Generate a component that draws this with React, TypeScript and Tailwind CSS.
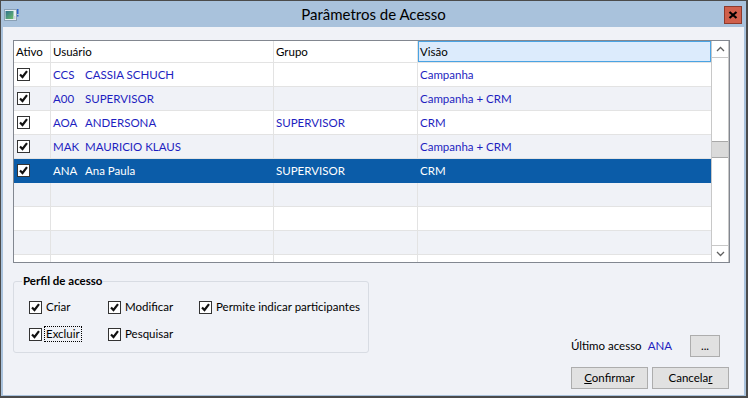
import React from "react";

type Row = { code: string; name: string; grupo: string; visao: string; selected?: boolean };

const rows: Row[] = [
    { code: "CCS", name: "CASSIA SCHUCH", grupo: "", visao: "Campanha" },
    { code: "A00", name: "SUPERVISOR", grupo: "", visao: "Campanha + CRM" },
    { code: "AOA", name: "ANDERSONA", grupo: "SUPERVISOR", visao: "CRM" },
    { code: "MAK", name: "MAURICIO KLAUS", grupo: "", visao: "Campanha + CRM" },
    { code: "ANA", name: "Ana Paula", grupo: "SUPERVISOR", visao: "CRM", selected: true },
];

const font = { fontFamily: "Lato, 'Noto Sans', sans-serif" };

const Check = () => (
    <span className="w-[13px] h-[13px] shrink-0 border border-[#333] bg-white flex items-center justify-center">
        <svg width="9" height="9" viewBox="0 0 9 9">
            <path d="M1 4.5 L3.5 7 L8 1.2" stroke="#111" strokeWidth="2.2" fill="none" />
        </svg>
    </span>
);

const Option = ({ label, focus }: { label: string; focus?: boolean }) => (
    <label className="h-[16px] flex items-center gap-[2px] text-[11.5px] text-black whitespace-nowrap">
        <Check />
        <span className={focus ? "border border-dotted border-black px-[1px] leading-[14px]" : "px-[2px]"}>{label}</span>
    </label>
);

const TitleIcon = () => (
    <svg width="15" height="12" viewBox="0 0 15 12">
        <defs>
            <linearGradient id="g" x1="0" y1="0" x2="1" y2="1">
                <stop offset="0" stopColor="#2f6f8f" />
                <stop offset="1" stopColor="#6cbf6a" />
            </linearGradient>
        </defs>
        <rect x="0.5" y="0.5" width="12" height="11" fill="#e8eef3" stroke="#8aa0b5" />
        <rect x="1.5" y="2" width="8" height="8" fill="url(#g)" />
        <rect x="9.5" y="7" width="2" height="3" fill="#c9d2da" />
        <rect x="13" y="0" width="1.5" height="5" fill="#2a63c9" />
        <rect x="13" y="6" width="1.5" height="1.5" fill="#2a63c9" />
    </svg>
);

export default function App() {
    return (
        <div className="w-[748px] h-[398px] bg-[#a9c2dc] border-t border-l border-r-2 border-b-2 border-[#4b4b4b] flex flex-col" style={font}>
            <div className="h-[26px] relative flex items-center justify-center shrink-0">
                <div className="absolute left-[3px] top-[8px]">
                    <TitleIcon />
                </div>
                <span className="text-[15px] text-black">Parâmetros de Acesso</span>
                <div className="absolute right-[4px] top-[5px] w-[18px] h-[18px] bg-[#d0604c] border border-[#8e3a2c] flex items-center justify-center">
                    <svg width="10" height="8" viewBox="0 0 10 8">
                        <path d="M1.5 1 L8.5 7 M8.5 1 L1.5 7" stroke="#000" strokeWidth="2.2" />
                    </svg>
                </div>
            </div>

            <div className="flex-1 mx-[2px] mb-[1px] bg-[#f0f2f7] flex flex-col pt-[13px] pl-[10px] pr-[14px] pb-[6px]">
                <div className="h-[223px] border border-[#828790] bg-white flex overflow-hidden shrink-0">
                    <div className="flex-1 flex flex-col text-[11.5px]">
                        <div className="h-[22px] shrink-0 grid grid-cols-[37px_223px_144px_1fr] border-b border-[#e3e3e3] text-black">
                            <div className="border-r border-[#e3e3e3] pl-[2px] flex items-center">Ativo</div>
                            <div className="border-r border-[#e3e3e3] pl-[2px] flex items-center">Usuário</div>
                            <div className="border-r border-[#e3e3e3] pl-[2px] flex items-center">Grupo</div>
                            <div className="border border-[#4aa3e3] bg-[#dcebfc] pl-[1px] flex items-center">Visão</div>
                        </div>
                        {rows.map((r, i) => (
                            <div
                                key={r.code}
                                className={`h-[24px] shrink-0 grid grid-cols-[37px_223px_144px_1fr] border-b ${r.selected
                                    ? "bg-[#0b5ca8] text-white border-[#0b5ca8]"
                                    : i % 2 === 0
                                        ? "bg-white text-[#1e1ec0] border-[#e3e3e3]"
                                        : "bg-[#f0f2f7] text-[#1e1ec0] border-[#e3e3e3]"
                                    }`}
                            >
                                <div className={`pl-[3px] flex items-center ${r.selected ? "" : "border-r border-[#e3e3e3]"}`}>
                                    <Check />
                                </div>
                                <div className={`pl-[2px] flex items-center ${r.selected ? "" : "border-r border-[#e3e3e3]"}`}>
                                    <span className="w-[32px]">{r.code}</span>
                                    <span>{r.name}</span>
                                </div>
                                <div className={`pl-[2px] flex items-center ${r.selected ? "" : "border-r border-[#e3e3e3]"}`}>{r.grupo}</div>
                                <div className="pl-[2px] flex items-center">{r.visao}</div>
                            </div>
                        ))}
                        {[0, 1, 2, 3].map((i) => (
                            <div
                                key={i}
                                className={`h-[24px] shrink-0 grid grid-cols-[37px_223px_144px_1fr] border-b border-[#e3e3e3] ${i % 2 === 0 ? "bg-[#f0f2f7]" : "bg-white"}`}
                            >
                                <div className="border-r border-[#e3e3e3]" />
                                <div className="border-r border-[#e3e3e3]" />
                                <div className="border-r border-[#e3e3e3]" />
                                <div />
                            </div>
                        ))}
                    </div>
                    <div className="w-[18px] shrink-0 border-l border-r border-[#c8c8c8] bg-white flex flex-col">
                        <div className="h-[17px] border-b border-[#c8c8c8] flex items-center justify-center">
                            <svg width="9" height="6" viewBox="0 0 9 6">
                                <path d="M1 5 L4.5 1.5 L8 5" stroke="#606060" strokeWidth="1.3" fill="none" />
                            </svg>
                        </div>
                        <div className="h-[83px]" />
                        <div className="h-[17px] bg-[#dadada] border-y border-[#a8a8a8]" />
                        <div className="flex-1" />
                        <div className="h-[17px] border-t border-[#c8c8c8] flex items-center justify-center">
                            <svg width="9" height="6" viewBox="0 0 9 6">
                                <path d="M1 1 L4.5 4.5 L8 1" stroke="#606060" strokeWidth="1.3" fill="none" />
                            </svg>
                        </div>
                    </div>
                </div>

                <div className="flex-1 flex justify-between">
                    <fieldset className="mt-[11px] self-start min-w-0 w-[356px] h-[79px] border border-[#d8dce3] rounded-[3px] px-[8px]">
                        <legend className="text-[11.5px] font-bold text-black px-[1px] leading-[14px]">Perfil de acesso</legend>
                        <div className="grid grid-cols-[79px_91px_1fr] gap-y-[11px] pl-[7px] pt-[11px]">
                            <Option label="Criar" />
                            <Option label="Modificar" />
                            <Option label="Permite indicar participantes" />
                            <Option label="Excluir" focus />
                            <Option label="Pesquisar" />
                        </div>
                    </fieldset>

                    <div className="flex flex-col items-end justify-end gap-[10px] pr-px text-[11.5px]">
                        <div className="flex items-center pr-[9px]">
                            <span className="text-black">Último acesso</span>
                            <span className="ml-[6px] text-[#1e1ec0]">ANA</span>
                            <button className="ml-[18px] w-[30px] h-[22px] bg-[#e1e1e1] border border-[#adadad] text-black leading-none">...</button>
                        </div>
                        <div className="flex gap-[4px]">
                            <button className="w-[77px] h-[22px] bg-[#e1e1e1] border border-[#adadad] text-black">
                                <span className="underline">C</span>onfirmar
                            </button>
                            <button className="w-[77px] h-[22px] bg-[#e1e1e1] border border-[#adadad] text-black">
                                Cancela<span className="underline">r</span>
                            </button>
                        </div>
                    </div>
                </div>
            </div>
        </div>
    );
}
